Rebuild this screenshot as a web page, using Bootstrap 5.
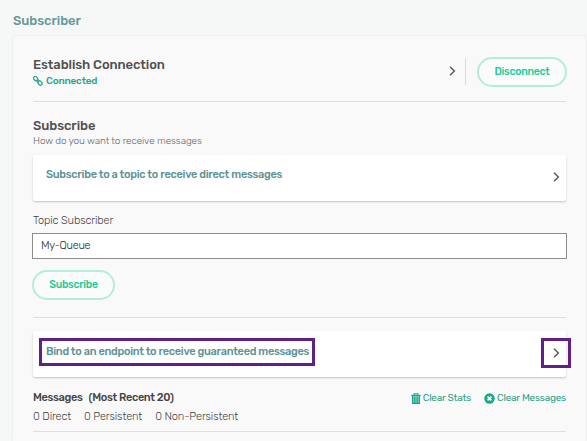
<!DOCTYPE html>
<html lang="en">
<head>
<meta charset="utf-8">
<meta name="viewport" content="width=device-width, initial-scale=1">
<title>Subscriber</title>
<link href="https://cdn.jsdelivr.net/npm/bootstrap@5.3.0/dist/css/bootstrap.min.css" rel="stylesheet">
<style>
body{font-family:Rubik,Roboto,"Liberation Sans",sans-serif;font-size:11px;font-weight:300;line-height:16px;color:#444;background:#f6f8f7;height:441px;overflow:hidden;white-space:nowrap}
.page{padding:13px 1px 0 13px}
.page-title{font-size:13px;font-weight:500;line-height:16px;color:#67979a;letter-spacing:-.06px;margin:0 0 7px}
.panel{height:405px;padding:21px 20px 0;background:#f9f9f9;border-radius:4px 4px 0 0;box-shadow:0 0 2px rgba(0,0,0,.12)}
.heading{font-size:13px;font-weight:500;line-height:16px;color:#505050;margin:0;letter-spacing:-.08px}
.connect-row{height:45px;border-bottom:1px solid #dedede}
.status{font-size:10px;font-weight:500;line-height:14px;color:#1fa88c;letter-spacing:-.18px;margin-top:1px}
.status span{margin-left:3px}
.vline{width:1px;height:27px;background:#dcdcdc;margin:0 11px 0 9px}
.pill{border:2px solid #b5ecda;border-radius:16px;height:30px;padding:0;font-size:10.5px;font-weight:500;line-height:26px;letter-spacing:-.25px;color:#1ccb9a;background:#fafcfb}
.pill-wide{width:90px;margin-right:-1px;margin-top:1px}
.pill-sub{width:83px;margin:11px 0 0 -1px;display:block}
.hint{font-size:10px;line-height:14px;letter-spacing:-.11px;color:#666}
.option{height:46px;padding:0 6px 0 13px;background:#fff;border-radius:2px;box-shadow:0 1px 2px rgba(0,0,0,.22)}
.option-title{font-weight:500;color:#5c9293;letter-spacing:-.29px;margin-bottom:6px}
.option > .chev{margin-bottom:3px}
.topic-label{margin:12px 0 4px;display:block;letter-spacing:-.12px}
.topic-input{width:535px;height:26px;margin-left:-1px;padding:0 8px 1px;border:1px solid #8e8e8e;border-radius:0;font-size:11px;font-weight:300;line-height:16px;letter-spacing:-.3px;color:#222;background:#fff}
.rule{height:1px;background:#dedede}
.marked{border:3px solid #621f86}
.mark-text{height:28px;line-height:22px;padding:0 3px 0 4px;margin:0 0 4px -7px;letter-spacing:-.3px}
.mark-arrow{width:30px;height:30px;margin-right:-11px;margin-bottom:2px}
.messages-title{font-weight:500;color:#444;letter-spacing:-.35px;gap:6px}
.actions{color:#2ba189;font-size:10px;font-weight:400;line-height:16px;letter-spacing:-.23px;gap:13px}
.actions > span{gap:2px}
.counts{gap:13px;margin-top:3px;letter-spacing:-.14px}
svg{display:block;flex:none}
</style>
</head>
<body>
<main class="page">
  <h1 class="page-title">Subscriber</h1>
  <section class="panel">
    <div class="connect-row d-flex justify-content-between">
      <div>
        <h2 class="heading">Establish Connection</h2>
        <div class="status d-flex align-items-center"><svg width="10" height="10" viewBox="0 0 10 10" fill="none" stroke="#1fa88c" stroke-width="1.3"><rect x="-2.4" y="-1.7" width="4.8" height="3.4" rx="1.5" transform="translate(2.7 2.7) rotate(45)"/><rect x="-2.4" y="-1.7" width="4.8" height="3.4" rx="1.5" transform="translate(7 7) rotate(45)"/><path d="m3.6 3.6 2.6 2.6"/></svg><span>Connected</span></div>
      </div>
      <div class="d-flex align-items-center h-100 pb-3">
        <svg class="chev" width="7" height="10" viewBox="0 0 7 10" fill="none" stroke="#555" stroke-width="1.4"><path d="m1 .8 4.4 4.2L1 9.2"/></svg>
        <span class="vline"></span>
        <button class="pill pill-wide">Disconnect</button>
      </div>
    </div>
    <h2 class="heading mt-3">Subscribe</h2>
    <div class="hint">How do you want to receive messages</div>
    <div class="option d-flex align-items-center justify-content-between" style="margin-top:7px"><span class="option-title">Subscribe to a topic to receive direct messages</span><svg class="chev" width="7" height="10" viewBox="0 0 7 10" fill="none" stroke="#555" stroke-width="1.4"><path d="m1 .8 4.4 4.2L1 9.2"/></svg></div>
    <label class="topic-label" for="topic">Topic Subscriber</label>
    <input class="topic-input d-block" id="topic" value="My-Queue">
    <button class="pill pill-sub">Subscribe</button>
    <div class="rule" style="margin-top:17px"></div>
    <div class="option d-flex align-items-center justify-content-between" style="margin-top:13px"><span class="option-title marked mark-text">Bind to an endpoint to receive guaranteed messages</span><span class="marked mark-arrow d-flex align-items-center justify-content-center"><svg width="7" height="10" viewBox="0 0 7 10" fill="none" stroke="#555" stroke-width="1.4"><path d="m1 .8 4.4 4.2L1 9.2"/></svg></span></div>
    <div class="d-flex justify-content-between" style="margin-top:13px">
      <div class="messages-title d-flex"><span>Messages</span><span>(Most Recent 20)</span></div>
      <div class="actions d-flex">
        <span class="d-flex align-items-center"><svg width="10" height="11" viewBox="0 0 10 11" fill="none" stroke="#16aa8d"><path d="M1.6 3h6.8v7.3H1.6z" fill="#8fd5c7" stroke="none"/><path d="M.3 2.4h9.4" stroke-width="1.3"/><path d="M3.2 2V.7h3.6V2" stroke-width="1.1"/><path d="M1.6 3v7.3h6.8V3M3.8 3.7v6M6.2 3.7v6" stroke-width="1.3"/></svg><span>Clear Stats</span></span>
        <span class="d-flex align-items-center"><svg width="11" height="11" viewBox="0 0 11 11"><circle cx="5.5" cy="5.5" r="5.2" fill="#16aa8d"/><path d="m3.6 3.6 3.8 3.8m0-3.8L3.6 7.4" stroke="#f9f9f9" stroke-width="1.8"/></svg><span>Clear Messages</span></span>
      </div>
    </div>
    <div class="counts d-flex"><span>0 Direct</span><span>0 Persistent</span><span>0 Non-Persistent</span></div>
    <div class="rule" style="margin-top:6px"></div>
  </section>
</main>
<script src="https://cdn.jsdelivr.net/npm/bootstrap@5.3.0/dist/js/bootstrap.bundle.min.js"></script>
</body>
</html>
